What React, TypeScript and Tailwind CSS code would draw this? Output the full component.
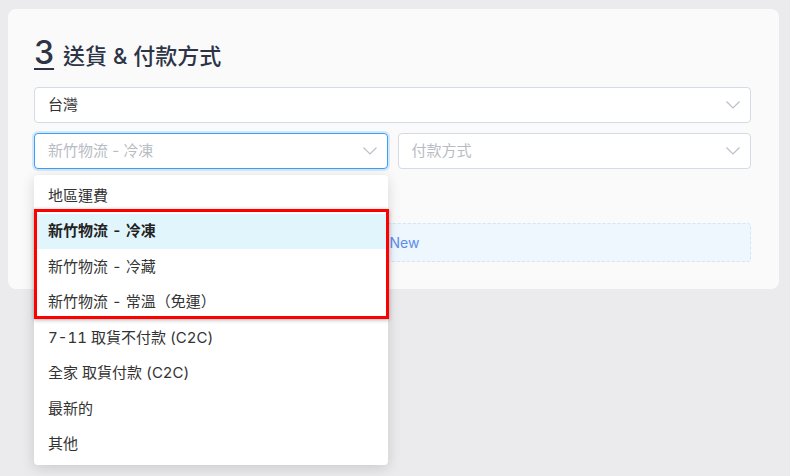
const shippingOptions = [
  '地區運費',
  '新竹物流 - 冷凍',
  '新竹物流 - 冷藏',
  '新竹物流 - 常溫（免運）',
  '7-11 取貨不付款 (C2C)',
  '全家 取貨付款 (C2C)',
  '最新的',
  '其他'
];

const selected = '新竹物流 - 冷凍';

function Chevron() {
  return (
    <svg width="14" height="8" viewBox="0 0 14 8" fill="none">
      <path d="M0.5 0.5 L7 7 L13.5 0.5" stroke="#b9bfc9" strokeWidth="1.2" />
    </svg>
  );
}

function Select({
  label,
  placeholder,
  focused
}: {
  label?: string;
  placeholder?: string;
  focused?: boolean;
}) {
  return (
    <div
      className={`h-9 bg-white rounded-[4px] border flex items-center justify-between pl-[13px] pr-[10px] ${
        focused
          ? 'border-[#3d9ef5] shadow-[0_0_0_2px_rgba(61,158,245,0.2)]'
          : 'border-[#d3dbe6]'
      }`}
    >
      {label ? (
        <span className="text-[15px] text-[#333]">{label}</span>
      ) : (
        <span className="text-[15px] text-[#b8bcc4]">{placeholder}</span>
      )}
      <Chevron />
    </div>
  );
}

export default function App() {
  return (
    <div
      className="min-h-screen bg-[#ebebed] pl-2 pt-[9px]"
      style={{ fontFamily: 'Inter, "Noto Sans CJK TC", sans-serif' }}
    >
      <div className="w-[771px] h-[280px] rounded-lg bg-[#fafafa] pl-[26px] pr-[28px] pt-[25px]">
        {/* Section heading */}
        <div className="flex items-baseline gap-[9px] text-[#2d3446]">
          <span className="text-[32px] leading-[38px] font-medium underline underline-offset-[4px] decoration-2">
            3
          </span>
          <span className="text-[22px] font-medium">送貨 &amp; 付款方式</span>
        </div>

        <div className="mt-[14px]">
          <Select label="台灣" />
        </div>

        <div className="relative mt-[10px]">
          <div className="grid grid-cols-2 gap-[10px]">
            <Select placeholder="新竹物流 - 冷凍" focused />
            <Select placeholder="付款方式" />
          </div>

          {/* Add new shipping button (behind the menu) */}
          <div className="mt-[54px] h-[39px] rounded-[4px] border border-dashed border-[#d6e4f5] bg-[#eef6fe] flex items-center justify-center pr-[20px]">
            <span className="text-[14px] text-[#5b8def]">+ Add New</span>
          </div>

          {/* Shipping dropdown menu */}
          <div className="absolute left-0 top-[42px] w-[354px] bg-white rounded-[4px] shadow-[0_3px_14px_rgba(0,0,0,0.14)] py-[3px] z-10">
            {shippingOptions.map((opt) => (
              <div
                key={opt}
                className={`h-[35.5px] flex items-center px-[14px] text-[15px] tabular-nums ${
                  opt === selected
                    ? 'bg-[#e1f5fc] font-semibold text-[#222]'
                    : 'text-[#333]'
                }`}
              >
                {opt}
              </div>
            ))}
            {/* Highlight box around the 新竹物流 options */}
            <div className="absolute left-0 top-[34px] w-[355px] h-[110px] border-[3px] border-[#ff0000] shadow-[0_1px_4px_rgba(0,0,0,0.3)]" />
          </div>
        </div>
      </div>
    </div>
  );
}
